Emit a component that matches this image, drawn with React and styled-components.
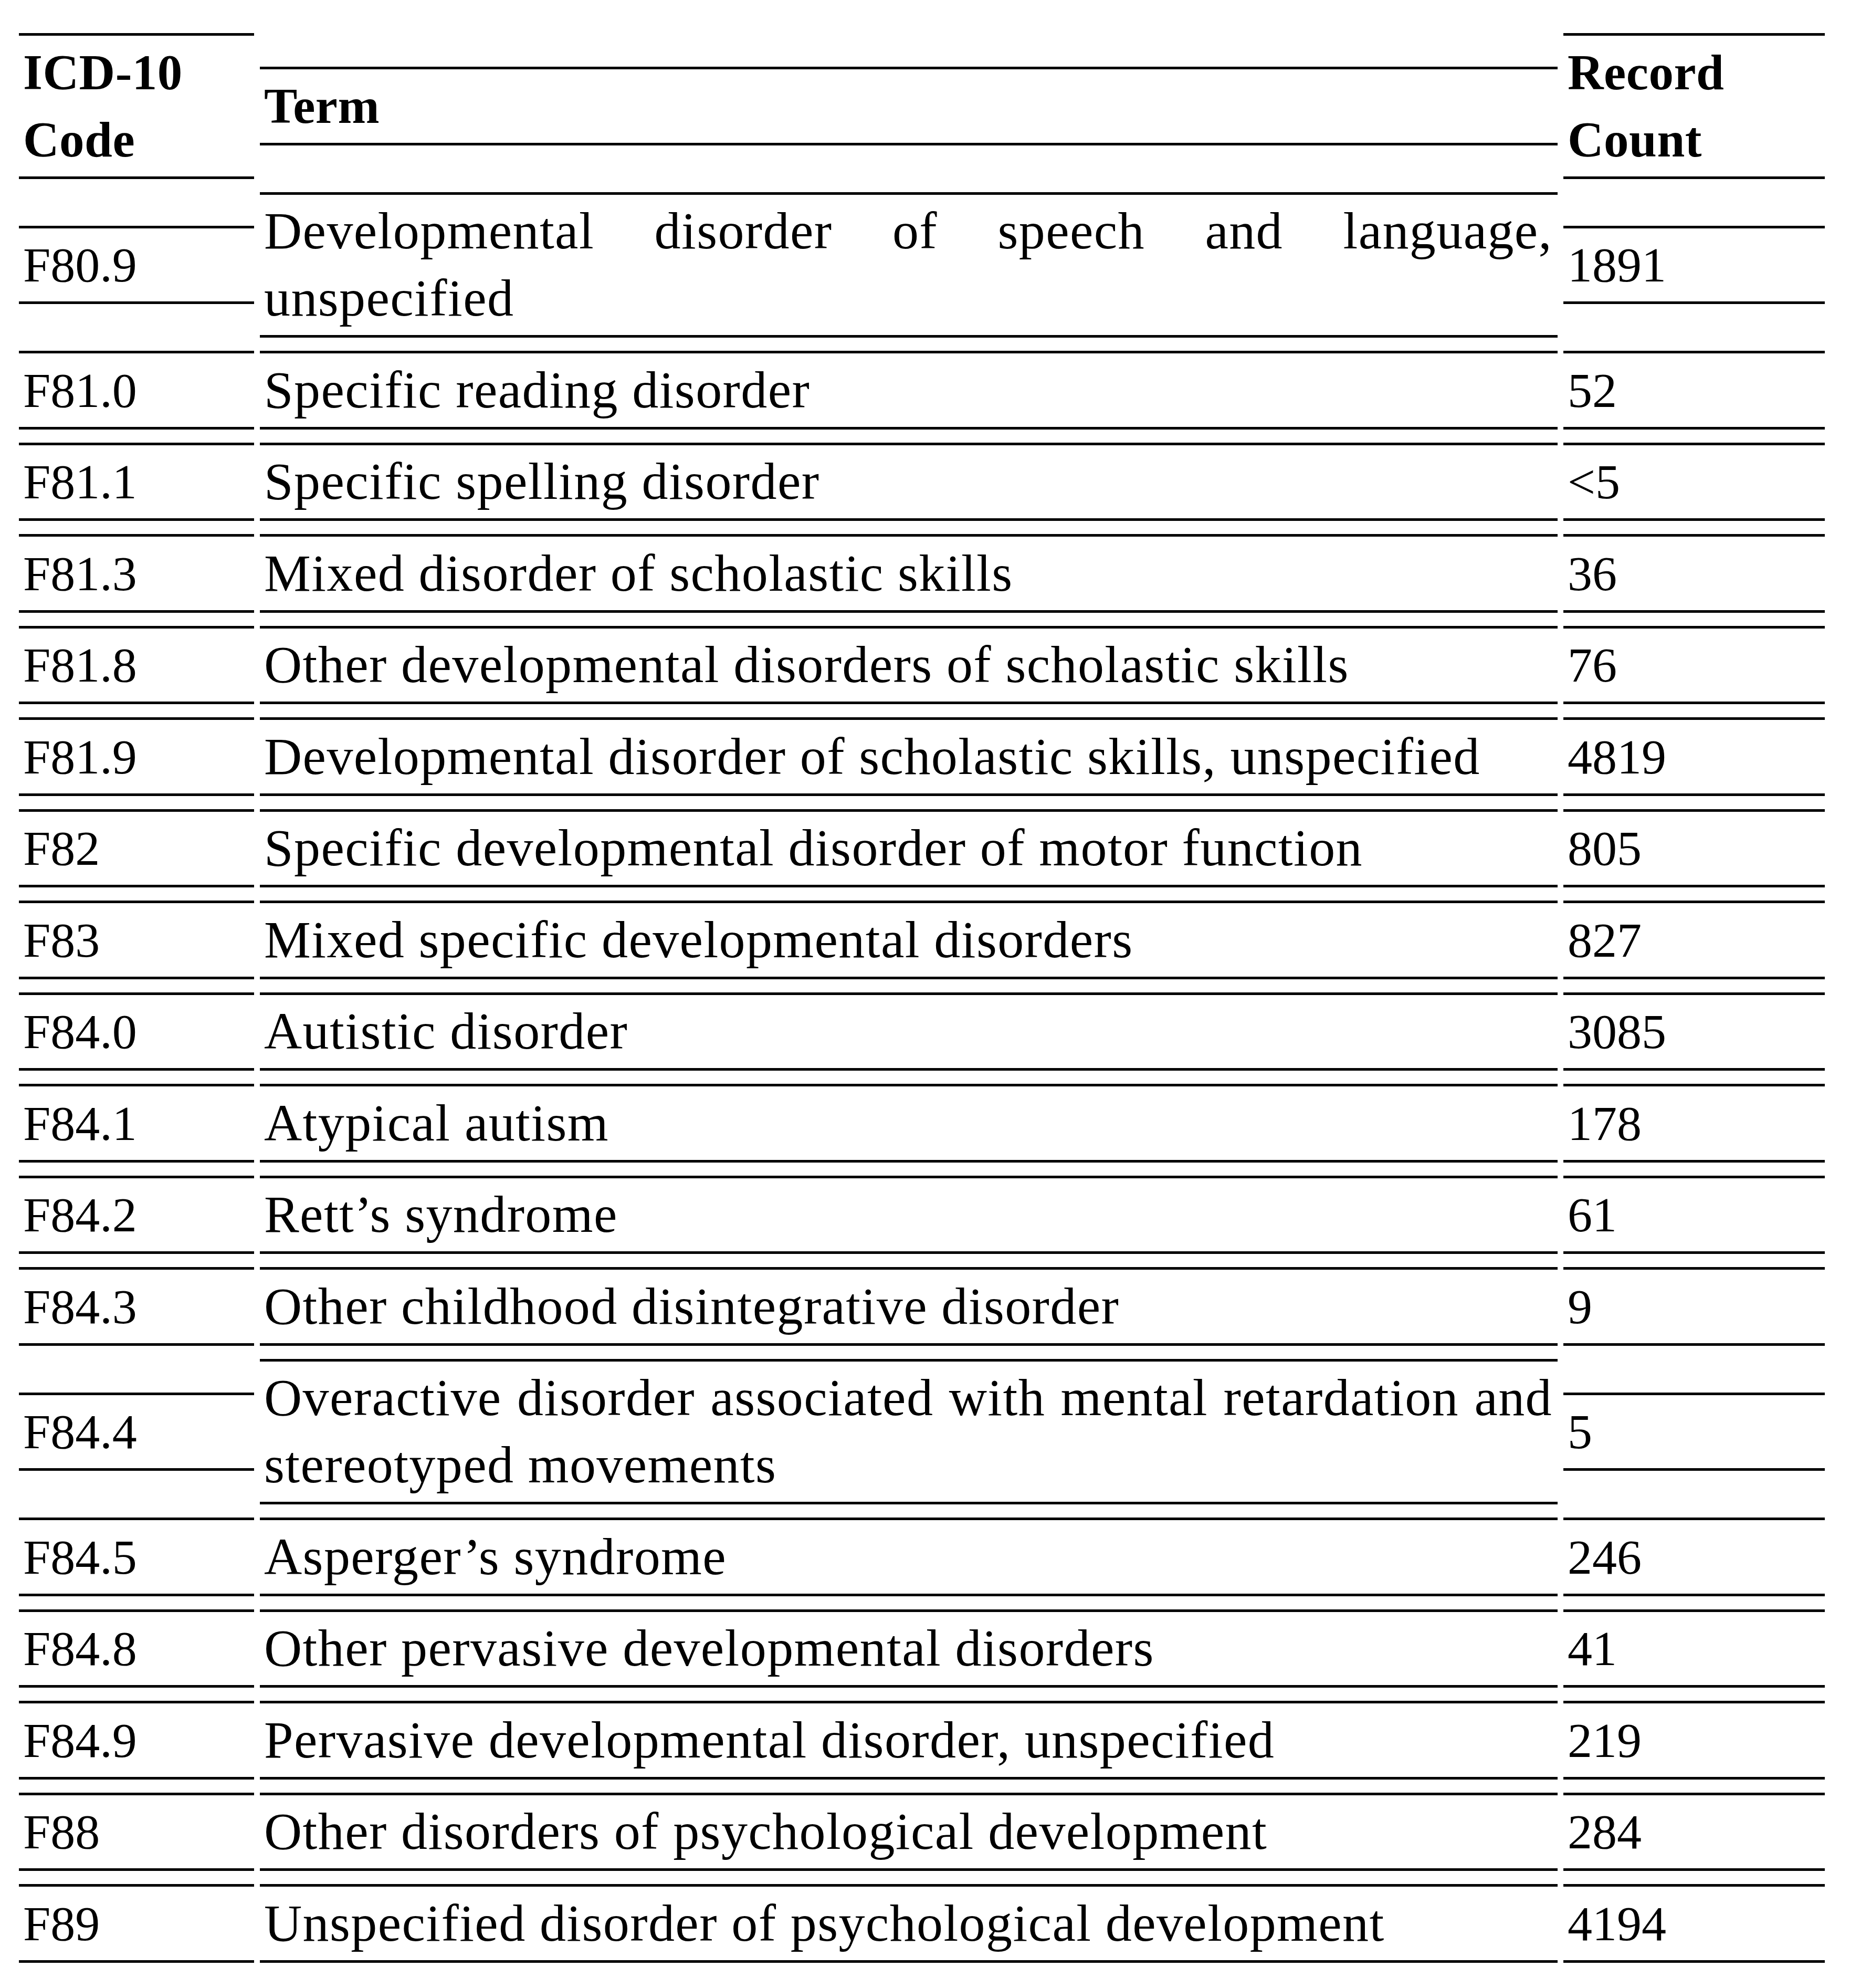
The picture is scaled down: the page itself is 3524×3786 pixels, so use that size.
import React from "react";
import styled, { createGlobalStyle } from "styled-components";

const rows = [
  { code: "F80.9", term: ["Developmental disorder of speech and language,", "unspecified"], count: "1891" },
  { code: "F81.0", term: ["Specific reading disorder"], count: "52" },
  { code: "F81.1", term: ["Specific spelling disorder"], count: "<5" },
  { code: "F81.3", term: ["Mixed disorder of scholastic skills"], count: "36" },
  { code: "F81.8", term: ["Other developmental disorders of scholastic skills"], count: "76" },
  { code: "F81.9", term: ["Developmental disorder of scholastic skills, unspecified"], count: "4819" },
  { code: "F82", term: ["Specific developmental disorder of motor function"], count: "805" },
  { code: "F83", term: ["Mixed specific developmental disorders"], count: "827" },
  { code: "F84.0", term: ["Autistic disorder"], count: "3085" },
  { code: "F84.1", term: ["Atypical autism"], count: "178" },
  { code: "F84.2", term: ["Rett’s syndrome"], count: "61" },
  { code: "F84.3", term: ["Other childhood disintegrative disorder"], count: "9" },
  {
    code: "F84.4",
    term: ["Overactive disorder associated with mental retardation and", "stereotyped movements"],
    count: "5",
  },
  { code: "F84.5", term: ["Asperger’s syndrome"], count: "246" },
  { code: "F84.8", term: ["Other pervasive developmental disorders"], count: "41" },
  { code: "F84.9", term: ["Pervasive developmental disorder, unspecified"], count: "219" },
  { code: "F88", term: ["Other disorders of psychological development"], count: "284" },
  { code: "F89", term: ["Unspecified disorder of psychological development"], count: "4194" },
];

const GlobalStyle = createGlobalStyle`
  html, body {
    margin: 0;
    padding: 0;
    background: #ffffff;
  }
  body {
    font-family: "Liberation Serif", "Times New Roman", serif;
    color: #000000;
  }
`;

const Table = styled.div`
  display: grid;
  grid-template-columns: 448px 2472px 498px;
  column-gap: 11px;
  row-gap: 25px;
  align-items: center;
  padding: 63px 0 40px 36px;
  width: max-content;
`;

const sizeFor = (p) => (p.$head ? "95px" : p.$num ? "94px" : "100px");
const spacingFor = (p) => (p.$head ? "0.5px" : p.$num ? "0" : "1.4px");

const Cell = styled.div`
  border-top: 5px solid #000;
  border-bottom: 5px solid #000;
  padding: 5.75px 10px 5.75px 8px;
  font-size: ${sizeFor};
  font-weight: ${(p) => (p.$head ? 700 : 400)};
  letter-spacing: ${spacingFor};
  line-height: 128px;
  white-space: ${(p) => (p.$head ? "normal" : "nowrap")};
`;

const FullLine = styled.span`
  display: block;
  text-align: justify;
  text-align-last: justify;
  white-space: normal;
`;

const TermText = ({ lines }) =>
  lines.map((line, i) =>
    i < lines.length - 1 ? <FullLine key={i}>{line}</FullLine> : <span key={i}>{line}</span>
  );

const App = () => {
  return (
    <>
      <GlobalStyle />
      <Table>
        <Cell $head>ICD-10 Code</Cell>
        <Cell $head>Term</Cell>
        <Cell $head>Record Count</Cell>
        {rows.map((row) => (
          <React.Fragment key={row.code}>
            <Cell $num>{row.code}</Cell>
            <Cell>
              <TermText lines={row.term} />
            </Cell>
            <Cell $num>{row.count}</Cell>
          </React.Fragment>
        ))}
      </Table>
    </>
  );
};

export default App;
